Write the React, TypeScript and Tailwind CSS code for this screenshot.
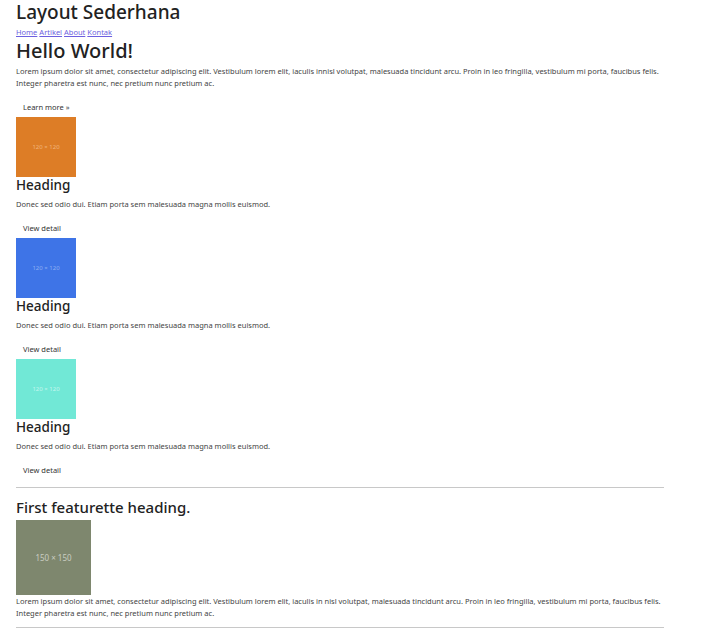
import React from "react";

const items = [
  { color: "bg-[#dd7d26]", text: "text-[#f0b47c]" },
  { color: "bg-[#3e74e7]", text: "text-[#8fb0f2]" },
  { color: "bg-[#71e8d6]", text: "text-[#c4f6ee]" },
];

const lorem =
  "Lorem ipsum dolor sit amet, consectetur adipiscing elit. Vestibulum lorem elit, iaculis innisl volutpat, malesuada tincidunt arcu. Proin in leo fringilla, vestibulum mi porta, faucibus felis. Integer pharetra est nunc, nec pretium nunc pretium ac.";

export default function App() {
  return (
    <div className="pl-4 w-[664px] text-[#222] font-['Noto_Sans',sans-serif]">
      <h1 className="text-[19px] leading-[24px] font-medium">Layout Sederhana</h1>
      <nav className="mt-[2px] flex gap-[2px] text-[7.5px] leading-[12px] text-[#6c5fe0]">
        <a href="#" className="underline">Home</a>
        <a href="#" className="underline">Artikel</a>
        <a href="#" className="underline">About</a>
        <a href="#" className="underline">Kontak</a>
      </nav>
      <h2 className="text-[20px] leading-[26px] font-medium">Hello World!</h2>
      <p className="mt-[1px] text-[7.5px] leading-[12px] text-[#444] pr-1">{lorem}</p>
      <div className="mt-[9px] h-[19px] flex items-center">
        <button className="pl-[7px] text-[7.5px] text-[#333]">Learn more »</button>
      </div>
      {items.map((it, i) => (
        <div key={i}>
          <div
            className={`w-[60px] h-[60px] flex items-center justify-center text-[6px] ${it.color} ${it.text}`}
          >
            120 × 120
          </div>
          <h3 className="text-[13.5px] leading-[16px] font-medium">Heading</h3>
          <p className="mt-[5px] text-[7.5px] leading-[12px] text-[#444]">
            Donec sed odio dui. Etiam porta sem malesuada magna mollis euismod.
          </p>
          <div className="mt-[9px] h-[19px] flex items-center">
            <button className="pl-[7px] text-[7.5px] text-[#333]">View detail</button>
          </div>
        </div>
      ))}
      <hr className="mt-[7px] border-[#c8c8c8]" />
      <h2 className="mt-[8px] text-[15px] leading-[22px] font-medium">First featurette heading.</h2>
      <div className="mt-[2px] w-[75px] h-[75px] bg-[#7e876e] text-[#c9cdc1] flex items-center justify-center text-[8px]">
        150 × 150
      </div>
      <p className="text-[7.5px] leading-[12px] text-[#444]">
        Lorem ipsum dolor sit amet, consectetur adipiscing elit. Vestibulum lorem elit, iaculis in nisl volutpat, malesuada tincidunt arcu. Proin in leo fringilla, vestibulum mi porta, faucibus felis. Integer pharetra est nunc, nec pretium nunc pretium ac.
      </p>
      <hr className="mt-[8px] border-[#c8c8c8]" />
    </div>
  );
}
